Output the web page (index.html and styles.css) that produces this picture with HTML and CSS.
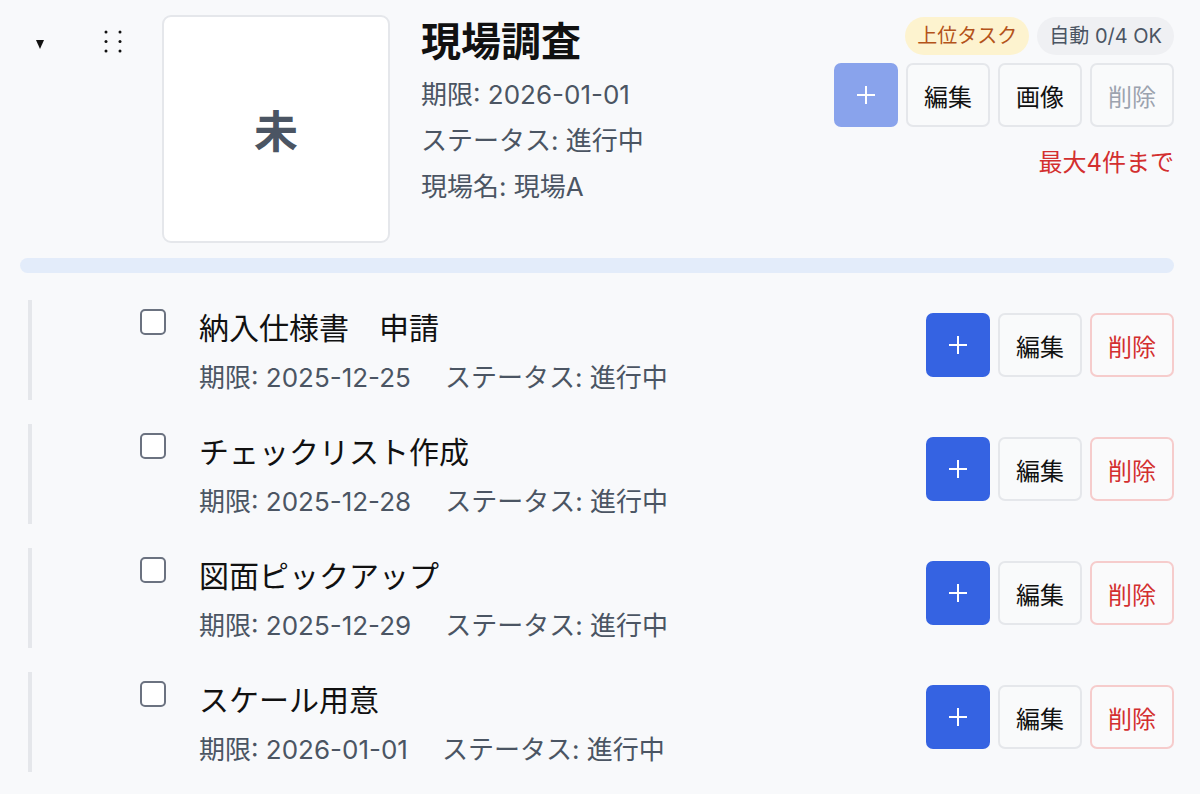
FILE: index.html
```html
<!DOCTYPE html>
<html lang="ja">
<head>
<meta charset="utf-8">
<link rel="stylesheet" href="styles.css">
</head>
<body>
<div class="page">
  <div class="task">
    <div class="toggle"><span class="caret"></span></div>
    <div class="drag">
      <svg width="18" height="23" viewBox="0 0 18 23"><g fill="#111"><circle cx="2" cy="2" r="1.5"/><circle cx="16" cy="2" r="1.5"/><circle cx="2" cy="11.5" r="1.5"/><circle cx="16" cy="11.5" r="1.5"/><circle cx="2" cy="21" r="1.5"/><circle cx="16" cy="21" r="1.5"/></g></svg>
    </div>
    <div class="thumb">未</div>
    <div class="info">
      <h1 class="title">現場調査</h1>
      <div class="meta-line">期限: 2026-01-01</div>
      <div class="meta-line">ステータス: 進行中</div>
      <div class="meta-line">現場名: 現場A</div>
    </div>
    <div class="side">
      <div class="badges">
        <span class="badge badge-parent">上位タスク</span>
        <span class="badge badge-auto">自動 0/4 OK</span>
      </div>
      <div class="actions">
        <button class="btn btn-add btn-add-disabled"><svg class="plus" width="18" height="18" viewBox="0 0 18 18"><path d="M9 0V18M0 9H18" stroke="#fff" stroke-width="2"/></svg></button>
        <button class="btn">編集</button>
        <button class="btn">画像</button>
        <button class="btn btn-muted">削除</button>
      </div>
      <div class="limit">最大4件まで</div>
    </div>
  </div>
  <div class="progress"></div>
  <div class="subtasks">
    <div class="sub">
      <span class="check"></span>
      <div class="sub-body">
        <div class="sub-title">納入仕様書　申請</div>
        <div class="sub-meta"><span>期限: 2025-12-25</span><span>ステータス: 進行中</span></div>
      </div>
      <div class="actions sub-actions">
        <button class="btn btn-add"><svg class="plus" width="18" height="18" viewBox="0 0 18 18"><path d="M9 0V18M0 9H18" stroke="#fff" stroke-width="2"/></svg></button>
        <button class="btn">編集</button>
        <button class="btn btn-danger">削除</button>
      </div>
    </div>
    <div class="sub">
      <span class="check"></span>
      <div class="sub-body">
        <div class="sub-title">チェックリスト作成</div>
        <div class="sub-meta"><span>期限: 2025-12-28</span><span>ステータス: 進行中</span></div>
      </div>
      <div class="actions sub-actions">
        <button class="btn btn-add"><svg class="plus" width="18" height="18" viewBox="0 0 18 18"><path d="M9 0V18M0 9H18" stroke="#fff" stroke-width="2"/></svg></button>
        <button class="btn">編集</button>
        <button class="btn btn-danger">削除</button>
      </div>
    </div>
    <div class="sub">
      <span class="check"></span>
      <div class="sub-body">
        <div class="sub-title">図面ピックアップ</div>
        <div class="sub-meta"><span>期限: 2025-12-29</span><span>ステータス: 進行中</span></div>
      </div>
      <div class="actions sub-actions">
        <button class="btn btn-add"><svg class="plus" width="18" height="18" viewBox="0 0 18 18"><path d="M9 0V18M0 9H18" stroke="#fff" stroke-width="2"/></svg></button>
        <button class="btn">編集</button>
        <button class="btn btn-danger">削除</button>
      </div>
    </div>
    <div class="sub">
      <span class="check"></span>
      <div class="sub-body">
        <div class="sub-title">スケール用意</div>
        <div class="sub-meta"><span>期限: 2026-01-01</span><span>ステータス: 進行中</span></div>
      </div>
      <div class="actions sub-actions">
        <button class="btn btn-add"><svg class="plus" width="18" height="18" viewBox="0 0 18 18"><path d="M9 0V18M0 9H18" stroke="#fff" stroke-width="2"/></svg></button>
        <button class="btn">編集</button>
        <button class="btn btn-danger">削除</button>
      </div>
    </div>
  </div>
</div>
</body>
</html>
```
FILE: styles.css
```css
* { box-sizing: border-box; }
html, body { margin: 0; padding: 0; }
body {
  background: #f8f9fb;
  font-family: "Inter", "Noto Sans CJK JP", sans-serif;
  color: #111;
  width: 1200px;
  height: 794px;
  overflow: hidden;
}
.page {
  padding: 15px 26px 0 20px;
}
.task {
  display: flex;
  align-items: flex-start;
}
.toggle {
  width: 42px;
  padding-left: 16px;
  padding-top: 25px;
  line-height: 0;
}
.caret {
  display: inline-block;
  width: 0;
  height: 0;
  border-left: 4.5px solid transparent;
  border-right: 4.5px solid transparent;
  border-top: 9px solid #111;
}
.drag {
  width: 100px;
  padding-left: 42px;
  padding-top: 15px;
  line-height: 0;
}
.thumb {
  width: 228px;
  height: 228px;
  background: #fff;
  border: 2px solid #e5e7eb;
  border-radius: 9px;
  display: flex;
  align-items: center;
  justify-content: center;
  font-size: 44px;
  font-weight: 700;
  color: #4b5563;
}
.info {
  flex: 1;
  padding-left: 31px;
}
.title {
  margin: 2px 0 0;
  font-size: 40px;
  line-height: 50px;
  font-weight: 700;
  color: #111;
}
.meta-line {
  font-size: 26px;
  line-height: 46px;
  color: #4b5563;
}
.title + .meta-line { margin-top: 5px; }
.side {
  display: flex;
  flex-direction: column;
  align-items: flex-end;
}
.badges {
  display: flex;
  gap: 8px;
  margin-top: 2px;
}
.badge {
  height: 38px;
  padding: 0 12px;
  border-radius: 19px;
  font-size: 20px;
  line-height: 38px;
  white-space: nowrap;
}
.badge-parent { background: #fdf3cf; color: #b4531a; }
.badge-auto { background: #eff0f3; color: #4b5563; }
.actions {
  display: flex;
  gap: 8px;
}
.side .actions { margin-top: 8px; }
.btn {
  height: 64px;
  width: 84px;
  border: 2px solid #e5e7eb;
  border-radius: 7px;
  background: #f9fafb;
  font-family: "Inter", "Noto Sans CJK JP", sans-serif;
  font-size: 24px;
  color: #111;
  padding: 0;
  display: flex;
  align-items: center;
  justify-content: center;
}
.btn-add {
  width: 64px;
  border: none;
  background: #3563e2;
}
.plus { display: block; }
.btn-add-disabled { background: #89a3ec; }
.btn-muted { color: #9ca3af; }
.btn-danger { color: #d32f2f; border-color: #f6cccc; background: #fafafb; }
.limit {
  margin-top: 21px;
  font-size: 24px;
  line-height: 30px;
  color: #d32f2f;
}
.progress {
  margin-top: 15px;
  height: 15px;
  border-radius: 8px;
  background: #e3ecfa;
}
.subtasks {
  margin-top: 27px;
  display: flex;
  flex-direction: column;
  gap: 24px;
  padding-left: 8px;
}
.sub {
  display: flex;
  align-items: flex-start;
  height: 100px;
  border-left: 4px solid #e5e7eb;
  padding-left: 108px;
}
.check {
  width: 26px;
  height: 26px;
  margin-top: 9px;
  border: 2px solid #6b7280;
  border-radius: 5px;
  background: #fff;
  flex-shrink: 0;
}
.sub-body {
  flex: 1;
  padding-left: 33px;
}
.sub-title {
  font-size: 30px;
  line-height: 40px;
  margin-top: 8px;
  color: #111;
}
.sub-meta {
  display: flex;
  gap: 34px;
  font-size: 26px;
  line-height: 40px;
  margin-top: 10px;
  color: #4b5563;
}
.sub-actions { margin-top: 13px; }
```
